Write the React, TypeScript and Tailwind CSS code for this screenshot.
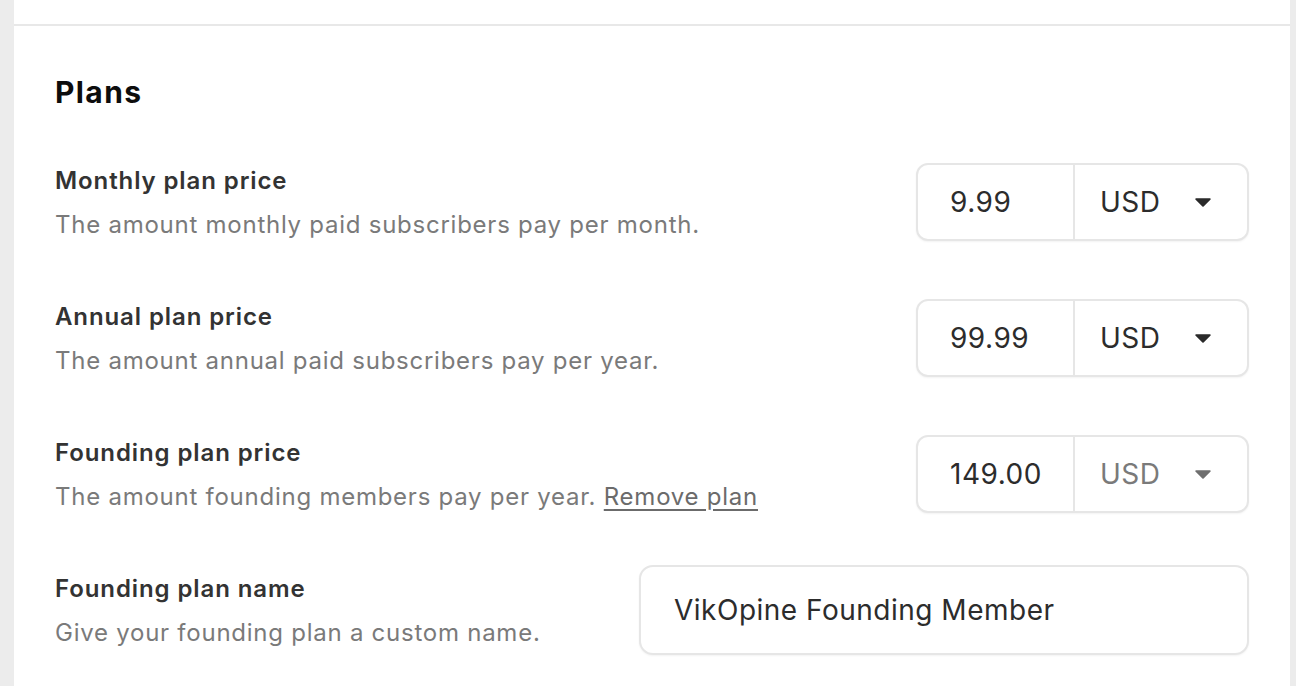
import { ReactNode } from "react";

const font = { fontFamily: "Inter, 'Noto Sans', sans-serif" };

function Caret({ muted }: { muted?: boolean }) {
  return (
    <svg viewBox="0 0 16 10" className="h-[10px] w-[16px]" fill={muted ? "#6f6f6f" : "#2a2a2a"}>
      <path d="M1 1.2h14a.8.8 0 0 1 .6 1.3L8.6 9.4a.8.8 0 0 1-1.2 0L.4 2.5A.8.8 0 0 1 1 1.2Z" />
    </svg>
  );
}

function PriceInput({ value, muted }: { value: string; muted?: boolean }) {
  return (
    <div className="flex h-[78px] w-[333px] shrink-0 overflow-hidden rounded-[12px] border-2 border-[#e6e6e6] bg-white shadow-[0_1px_2px_rgba(0,0,0,0.05)]">
      <div className="flex w-[157px] items-center border-r-2 border-[#e6e6e6] pl-[32px] text-[28px] tracking-[0.5px] text-[#2c2c2c]">
        {value}
      </div>
      <div className="flex flex-1 items-center justify-between pl-[25px] pr-[36px]">
        <span className={`text-[28px] tracking-[0.5px] ${muted ? "text-[#7a7a7a]" : "text-[#2c2c2c]"}`}>USD</span>
        <Caret muted={muted} />
      </div>
    </div>
  );
}

function Row({
  label,
  description,
  children,
  className = "",
  offset = "pt-[2px]",
}: {
  label: string;
  description: ReactNode;
  children: ReactNode;
  className?: string;
  offset?: string;
}) {
  return (
    <div className={`flex items-start justify-between gap-8 ${className}`}>
      <div className={`flex flex-col gap-[12px] ${offset}`}>
        <div className="text-[24px] leading-[32px] font-semibold tracking-[0.9px] text-[#333]">{label}</div>
        <div className="text-[24px] leading-[32px] tracking-[0.75px] text-[#7a7a7a]">{description}</div>
      </div>
      {children}
    </div>
  );
}

export default function App() {
  return (
    <div className="min-h-screen bg-[#ececec] pl-[14px] pr-[6px]" style={font}>
      <div className="h-[26px] border-b-2 border-[#e8e8e8] bg-white" />
      <div className="min-h-[660px] bg-white pl-[41px] pr-[41px] pt-[48px]">
        <h2 className="text-[30px] leading-[36px] font-bold tracking-[1.4px] text-[#0d0d0d]">Plans</h2>
        <div className="mt-[53px] flex flex-col">
          <Row label="Monthly plan price" description="The amount monthly paid subscribers pay per month." className="mb-[58px]">
            <PriceInput value="9.99" />
          </Row>
          <Row label="Annual plan price" description="The amount annual paid subscribers pay per year." className="mb-[58px]">
            <PriceInput value="99.99" />
          </Row>
          <Row
            label="Founding plan price"
            description={
              <>
                The amount founding members pay per year.{" "}
                <a href="#" className="text-[#6b6b6b] underline underline-offset-[4px]">
                  Remove plan
                </a>
              </>
            }
            className="mb-[52px]"
          >
            <PriceInput value="149.00" muted />
          </Row>
          <Row label="Founding plan name" description="Give your founding plan a custom name." offset="pt-[8px]">
            <div className="flex h-[90px] w-[610px] shrink-0 items-center rounded-[14px] border-2 border-[#e6e6e6] bg-white pl-[33px] text-[28px] tracking-[0.5px] text-[#2c2c2c] shadow-[0_1px_2px_rgba(0,0,0,0.05)]">
              VikOpine Founding Member
            </div>
          </Row>
        </div>
      </div>
    </div>
  );
}
